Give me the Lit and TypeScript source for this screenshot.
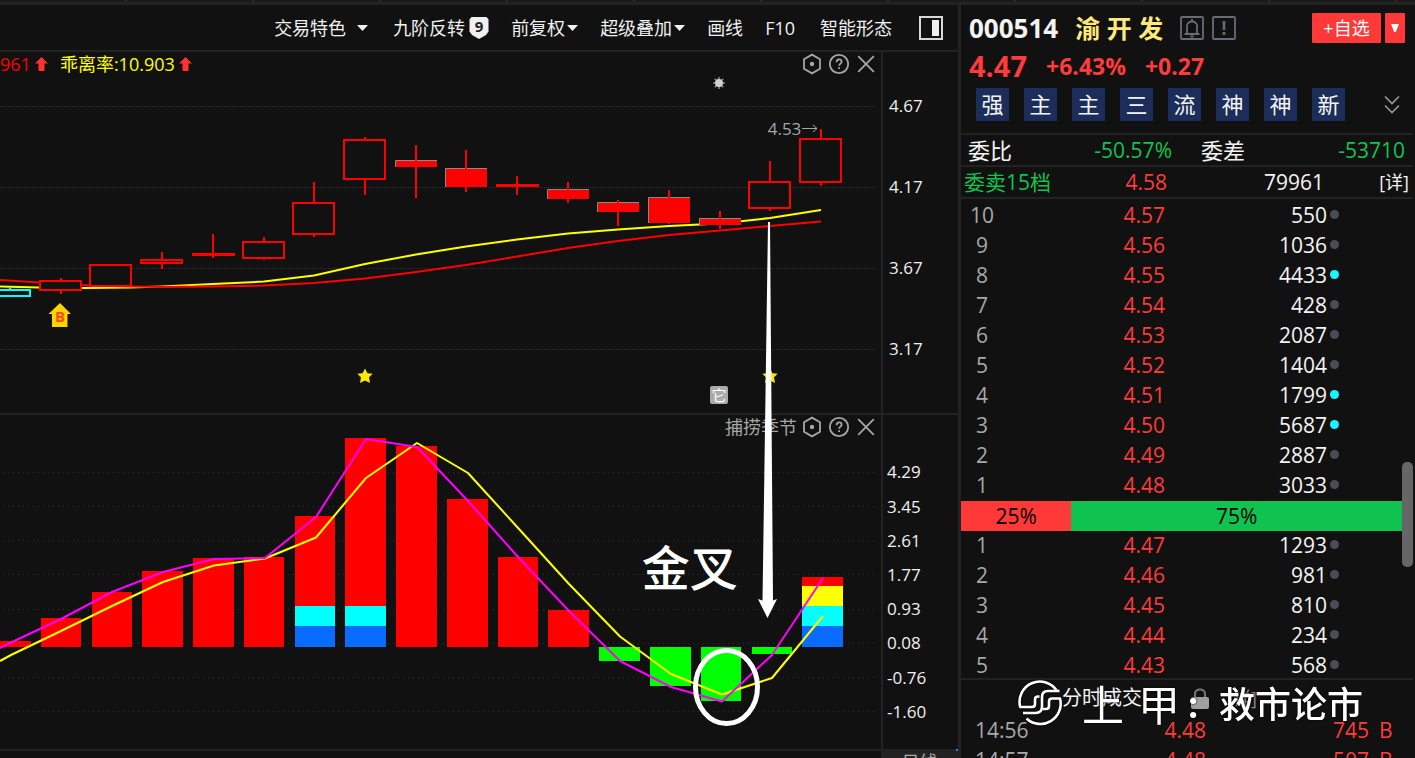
import { LitElement, html, css, svg } from "lit";
import { customElement } from "lit/decorators.js";

type Candle = { x: number; top: number; bottom: number; high: number; low: number; kind: "up" | "down" | "flat" | "cyan" };

const CANDLES: Candle[] = [
  { x: 10, top: 289, bottom: 296, high: 287, low: 297, kind: "cyan" },
  { x: 61, top: 280, bottom: 290, high: 278, low: 294, kind: "up" },
  { x: 111, top: 264, bottom: 286, high: 264, low: 286, kind: "up" },
  { x: 162, top: 259, bottom: 263, high: 252, low: 269, kind: "up" },
  { x: 213, top: 253, bottom: 256, high: 234, low: 258, kind: "flat" },
  { x: 264, top: 241, bottom: 258, high: 237, low: 260, kind: "up" },
  { x: 314, top: 202, bottom: 234, high: 182, low: 237, kind: "up" },
  { x: 365, top: 139, bottom: 179, high: 137, low: 195, kind: "up" },
  { x: 416, top: 160, bottom: 167, high: 145, low: 198, kind: "down" },
  { x: 466, top: 168, bottom: 187, high: 150, low: 192, kind: "down" },
  { x: 517, top: 184, bottom: 187, high: 176, low: 195, kind: "flat" },
  { x: 568, top: 189, bottom: 199, high: 182, low: 203, kind: "down" },
  { x: 618, top: 202, bottom: 212, high: 200, low: 226, kind: "down" },
  { x: 669, top: 197, bottom: 223, high: 190, low: 224, kind: "down" },
  { x: 720, top: 218, bottom: 225, high: 211, low: 229, kind: "down" },
  { x: 770, top: 181, bottom: 208, high: 161, low: 211, kind: "up" },
  { x: 821, top: 138, bottom: 182, high: 129, low: 186, kind: "up" },
];

const ZERO = 647;
const BARS: [number, number, number][] = [
  [-10, 31, 641], [41, 81, 618], [92, 132, 592], [142, 183, 571], [193, 234, 558], [244, 284, 557],
  [295, 335, 516], [345, 386, 438], [396, 437, 446], [447, 488, 499], [498, 538, 557], [548, 589, 610],
  [599, 640, 661], [650, 691, 686], [701, 741, 701], [752, 792, 654], [802, 843, 577],
];
const BANDS: [number, number, number, number, string][] = [
  [295, 335, 606, 626, "#00ffff"], [295, 335, 626, 647, "#0a6cff"],
  [345, 386, 606, 626, "#00ffff"], [345, 386, 626, 647, "#0a6cff"],
  [802, 843, 586, 606, "#ffff00"], [802, 843, 606, 626, "#00ffff"], [802, 843, 626, 647, "#0a6cff"],
];

const MA_FAST = "0,286.5 39,287.5 61,287.5 82,288 130,287.5 162,286.5 213,284 264,281.5 314,275.5 365,264 416,254.5 466,246.5 517,239.5 568,233.5 618,229.5 669,226 720,223.5 770,218 821,210";
const MA_SLOW = "0,280 39,282.5 61,284 91,285.5 132,286.5 162,287 213,286.5 264,285.5 314,283 365,278.5 416,272 466,265 517,256.5 568,248 618,241 669,235 720,230.5 770,226 821,221.5";
const OSC_FAST = "0,648 10,643 61,619 112,592 163,572 214,559 265,558 316,517 366,439 417,447 468,501 519,558 569,611 620,661 671,687 722,701.5 772,655 823,578";
const OSC_SLOW = "0,661 11,655 61,631 112,606 163,582 214,565.5 265,558.5 316,537.5 366,478 417,443 468,473 519,529 569,584 620,636.5 671,674 722,694.5 772,678 823,616";

const PRICE_TICKS = ["4.67", "4.17", "3.67", "3.17"];
const PRICE_GRID = [106.5, 187.5, 268.5, 349.5];
const OSC_TICKS = ["4.29", "3.45", "2.61", "1.77", "0.93", "0.08", "-0.76", "-1.60"];
const OSC_GRID = [472.5, 506.5, 540.5, 574.5, 609.5, 643.5, 677.5, 711.5];

type Quote = [string, string, string, boolean?];
const ASKS: Quote[] = [
  ["10", "4.57", "550"], ["9", "4.56", "1036"], ["8", "4.55", "4433", true], ["7", "4.54", "428"], ["6", "4.53", "2087"],
  ["5", "4.52", "1404"], ["4", "4.51", "1799", true], ["3", "4.50", "5687", true], ["2", "4.49", "2887"], ["1", "4.48", "3033"],
];
const BIDS: Quote[] = [
  ["1", "4.47", "1293"], ["2", "4.46", "981"], ["3", "4.45", "810"], ["4", "4.44", "234"], ["5", "4.43", "568"],
];
const TRADES = [["14:56", "4.48", "745", "B"], ["14:57", "4.48", "507", "B"]];
const TAGS = ["强", "主", "主", "三", "流", "神", "神", "新"];

const base = css`
  * { box-sizing: border-box; }
  button {
    font: inherit; color: inherit; background: none; border: 0; padding: 0; margin: 0; cursor: pointer;
    display: flex; align-items: center;
  }
  svg { display: block; flex: none; }
`;

@customElement("pane-tools")
class PaneTools extends LitElement {
  static styles = [base, css`
    :host { display: flex; gap: 5px; color: #a6a6a6; }
  `];
  render() {
    return html`
      <button aria-label="设置"><svg width="22" height="22" viewBox="0 0 22 22" fill="none" stroke="currentColor" stroke-width="1.8">
        <path d="M11 1.600 19 6.200v9.600l-8 4.600-8-4.600V6.200z"/><circle cx="11" cy="11" r="2.200" fill="currentColor" stroke="none"/></svg></button>
      <button aria-label="帮助"><svg width="22" height="22" viewBox="0 0 22 22" fill="none" stroke="currentColor" stroke-width="1.8">
        <circle cx="11" cy="11" r="9.2"/><path d="M8.600 9.200c0-3.800 5-3.400 5-.4 0 1.700-2.500 1.900-2.500 4"/><path d="M11.100 14.200v1.900"/></svg></button>
      <button aria-label="关闭"><svg width="22" height="22" viewBox="0 0 22 22" fill="none" stroke="currentColor" stroke-width="1.8">
        <path d="M3.200 3.200l15.600 15.600M18.800 3.200 3.200 18.800"/></svg></button>
    `;
  }
}

@customElement("chart-toolbar")
class ChartToolbar extends LitElement {
  static styles = [base, css`
    :host {
      display: flex; justify-content: flex-end; align-items: center; gap: 22px; height: 47px; padding: 0 15px 0 0;
      border-bottom: 2px solid #222; font-size: 18px; line-height: 24px; color: #f0f0f0; white-space: nowrap;
    }
    .item { gap: 2px; }
    .wide { gap: 11px; padding-right: 3px; }
    .badge { gap: 4px; }
    .code { padding-right: 3px; }
    .last { padding-right: 5px; }
  `];
  caret() {
    return svg`<svg width="11" height="6" viewBox="0 0 11 6"><path d="M0 0h11L5.5 6z" fill="currentColor"/></svg>`;
  }
  render() {
    return html`
      <button class="item wide">交易特色 ${this.caret()}</button>
      <button class="item badge">九阶反转
        <svg width="20" height="22" viewBox="0 0 20 22"><path d="M2.500 0h15l2 2.500v12l-2.500 3.500-7 4-7-4-2.500-3.500v-12z" fill="#f0f0f0"/>
          <text x="10" y="15" text-anchor="middle" font-family="Open Sans, sans-serif" font-size="15" font-weight="700" fill="#222">9</text></svg>
      </button>
      <button class="item">前复权${this.caret()}</button>
      <button class="item">超级叠加${this.caret()}</button>
      <button>画线</button>
      <button class="code">F10</button>
      <button class="last">智能形态</button>
      <button aria-label="侧栏"><svg width="24" height="24" viewBox="0 0 24 24"><rect x="1" y="1" width="22" height="22" fill="none" stroke="#d8d8d8" stroke-width="2"/><path d="M13 4h7v16h-7z" fill="#f0f0f0"/></svg></button>
    `;
  }
}

@customElement("stock-charts")
class StockCharts extends LitElement {
  static styles = [base, css`
    :host {
      position: relative; display: grid; grid-template-columns: minmax(0, 1fr) 75px;
      grid-template-rows: minmax(0, 361fr) minmax(0, 336fr); min-height: 0; font-size: 18px; line-height: 24px;
    }
    .pane { position: relative; min-height: 0; overflow: hidden; border-right: 2px solid #222; }
    .axis { display: grid; min-height: 0; color: #f0f0f0; font-size: 17px; align-items: center; padding-left: 6px; }
    .price-axis { grid-template-rows: 13fr repeat(4, 81fr) 24fr; }
    .osc-axis { grid-template-rows: 40fr repeat(8, 34fr) 20fr; padding-left: 4px; }
    .lower { border-top: 2px solid #222; }
    .plot { position: absolute; inset: 0; width: 100%; height: 100%; }
    .legend { position: absolute; left: 0; top: 0; display: flex; align-items: center; gap: 4px; }
    .fast { color: #ffff00; margin-left: 8px; }
    .slow { color: #ff0000; }
    .tools { position: absolute; right: 4px; top: 1px; display: flex; align-items: center; gap: 4px; color: #a6a6a6; }
    .lower .tools { top: 0; }
    .notes { position: absolute; inset: 0; width: 100%; height: 100%; pointer-events: none; }
    .peak { position: absolute; right: 7%; top: 18%; color: #a6a6a6; display: flex; align-items: center; font-size: 17px; }
    .event {
      position: absolute; left: 80.6%; top: 92.5%; width: 18px; height: 18px; border-radius: 2px;
      background: #aaa; color: #fff; font-size: 15px; line-height: 18px; text-align: center;
    }
    .cross { position: absolute; left: 67%; top: 70%; color: #fff; font-size: 48px; line-height: 56px; font-weight: 500; }
  `];

  candle(c: Candle) {
    const l = c.x - 21;
    const color = c.kind === "cyan" ? "#00ffff" : "#ff0000";
    const body =
      c.kind === "flat"
        ? svg`<rect x=${l} y=${c.top} width="43" height="3" fill="#f00"/>`
        : c.kind === "down"
          ? svg`<rect x=${l} y=${c.top} width="42" height=${c.bottom - c.top} fill="#f00"/>
                <path d="M${l + 0.5} ${c.bottom}V${c.top + 0.5}H${l + 42}" fill="none" stroke="#8a8a8a"/>`
          : svg`<rect x=${l} y=${c.top + 1} width="41" height=${c.bottom - c.top - 1} fill="#111" stroke=${color} stroke-width="2"/>`;
    return svg`<path d="M${c.x} ${c.high}V${c.low}" stroke=${color} stroke-width="2"/>${body}
      ${c.kind === "down" ? svg`<path d="M${c.x} ${c.high}V${c.low}" stroke="#f00" stroke-width="2"/>` : ""}`;
  }

  arrow() {
    return svg`<svg width="13" height="16" viewBox="0 0 13 16"><path d="M6.500 1 13 7.500H9.500V15h-6V7.500H0z" fill="#ff3232"/></svg>`;
  }

  star(x: number, y: number) {
    return svg`<path transform="translate(${x} ${y})" d="M0-7.500 2.400-2.700 7.700-2.300 4 1.200 5 7 0 4.600-5 7-4 1.200-7.700-2.300-2.400-2.700z" fill="#ffe800"/>`;
  }

  render() {
    return html`
      <section class="pane" aria-label="K线">
        <svg class="plot" viewBox="0 52 881 361" preserveAspectRatio="none">
          ${PRICE_GRID.map((y) => svg`<path d="M0 ${y}H875" stroke="#303030" stroke-dasharray="1 1"/>`)}
          <g fill="none" stroke-width="2" stroke-linejoin="round">
            <polyline points=${MA_FAST} stroke="#ff0"/>
            <polyline points=${MA_SLOW} stroke="#f00"/>
          </g>
          ${CANDLES.map((c) => this.candle(c))}
          ${this.star(365, 376)}${this.star(770, 376)}
          <path d="M60 303 71 314H67.500V327H52V314H48.500z" fill="#ffd500"/>
          <text x="60" y="322" text-anchor="middle" font-family="Open Sans, sans-serif" font-size="15" font-weight="700" fill="#ff4a22">B</text>
          <path d="M719 77v12M713 83h12M714.800 78.800l8.400 8.400M723.200 78.800l-8.400 8.400" stroke="#8c8c8c" stroke-width="1.500"/>
          <circle cx="719" cy="83" r="4" fill="#d0d0d0"/>
        </svg>
        <div class="legend">
          <span class="slow">961</span>${this.arrow()}
          <span class="fast">乖离率:10.903</span>${this.arrow()}
        </div>
        <div class="tools"><pane-tools></pane-tools></div>
        <div class="peak"><span>4.53</span><svg width="18" height="12" viewBox="0 0 18 12" fill="none" stroke="currentColor"><path d="M1 5.500h15M12 2l4 3.500L12 9"/></svg></div>
        <span class="event">它</span>
      </section>
      <div class="axis price-axis"><i></i>${PRICE_TICKS.map((t) => html`<span>${t}</span>`)}</div>

      <section class="pane lower" aria-label="捕捞季节">
        <svg class="plot" viewBox="0 415 881 334" preserveAspectRatio="none">
          ${OSC_GRID.map((y) => svg`<path d="M3 ${y}H875" stroke="#303030" stroke-dasharray="1 4"/>`)}
          ${BARS.map(([a, b, y]) => svg`<rect x=${a} y=${Math.min(y, ZERO)} width=${b - a} height=${Math.abs(y - ZERO)} fill=${y > ZERO ? "#0f0" : "#f00"}/>`)}
          ${BANDS.map(([a, b, t, e, f]) => svg`<rect x=${a} y=${t} width=${b - a} height=${e - t} fill=${f}/>`)}
          <g fill="none" stroke-width="2" stroke-linejoin="round">
            <polyline points=${OSC_SLOW} stroke="#ff0"/>
            <polyline points=${OSC_FAST} stroke="#f0f"/>
          </g>
        </svg>
        <div class="tools">捕捞季节<pane-tools></pane-tools></div>
      </section>
      <div class="axis osc-axis lower"><i></i>${OSC_TICKS.map((t) => html`<span>${t}</span>`)}</div>

      <svg class="notes" viewBox="0 52 958 697" preserveAspectRatio="none">
        <path d="M768 222h2L773 600.500l4-1.500-9.500 19-9.500-19 4.500 1.500z" fill="#fff"/>
        <ellipse cx="726.500" cy="687" rx="31" ry="36.500" fill="none" stroke="#fff" stroke-width="5"/>
      </svg>
      <span class="cross">金叉</span>
    `;
  }
}

@customElement("quote-panel")
class QuotePanel extends LitElement {
  static styles = [base, css`
    :host { position: relative; display: block; min-width: 0; overflow: hidden; font-size: 22px; line-height: 30px; color: #f4f4f4; white-space: nowrap; padding-right: 2px; }
    .n { font-size: 21px; }
    .red { color: #ff3b3b; }
    .green { color: #12c350; }
    .title { display: flex; align-items: center; height: 46px; padding: 0 8px; }
    .code { font-size: 26px; font-weight: 700; }
    .name { font-size: 25px; font-weight: 700; color: #ffe97a; margin: 0 17px 0 17px; }
    .mini { margin-right: 8px; }
    .add { margin-left: auto; width: 69px; height: 30px; justify-content: center; background: #ff3838; color: #fff; font-size: 18px; border-radius: 1px; }
    .more { width: 20px; height: 30px; margin-left: 4px; justify-content: center; background: #ff3838; border-radius: 1px; }
    .price { display: flex; align-items: center; gap: 19px; height: 30px; padding-left: 8px; font-weight: 700; font-size: 23px; }
    .last { font-size: 29px; }
    .tags { display: flex; align-items: center; gap: 15px; padding: 7px 13px 12px 15px; }
    .tag { width: 33px; height: 33px; padding-bottom: 2px; justify-content: center; background: #1c2d5a; }
    .expand { margin-left: auto; }
    .row { display: grid; align-items: center; border-top: 2px solid #222; height: 32px; }
    .right { text-align: right; }
    .pair { display: flex; justify-content: space-between; }
    .ratio { grid-template-columns: 204px 1fr; column-gap: 29px; padding: 0 8px 0 7px; }
    .total { grid-template-columns: 203px 157px 1fr; padding: 0 4px 0 3px; }
    .detail { font-size: 18px; color: #f4f4f4; text-decoration: none; }
    .book { position: relative; border-top: 2px solid #222; padding: 2px 11px 0 0; }
    table { width: 100%; border-collapse: collapse; table-layout: fixed; font-size: 21px; }
    td { padding: 0; height: 30px; line-height: 28px; vertical-align: top; }
    .c1 { width: 42px; text-align: center; color: #a8a8a8; }
    .c2 { width: 162px; text-align: right; }
    .c3 { width: 162px; text-align: right; }
    .dot { display: block; width: 9px; height: 9px; border-radius: 50%; background: #4a4c56; margin: 9px 0 0 3px; }
    .big { background: #19f5ff; }
    .split { display: flex; color: #000; font-size: 21px; }
    .buy { width: 25%; background: #ff3838; text-align: center; }
    .sell { flex: 1; background: #10c350; text-align: center; }
    .bids { margin-bottom: -3px; }
    .thumb { position: absolute; right: 0; top: 263px; width: 11px; height: 105px; border-radius: 5px; background: #666; }
    .tape { border-top: 2px solid #222; }
    .tape-head { display: flex; align-items: center; height: 36px; padding-left: 101px; font-size: 20px; }
    .lock { margin: 0 18px 0 49px; }
    .dim { color: #8b8b8b; font-size: 18px; text-decoration: none; }
    .t1 { width: 81px; padding-left: 14px; color: #a8a8a8; }
    .t2 { width: 164px; text-align: right; }
    .t3 { width: 163px; text-align: right; }
    .t4 { padding-left: 10px; }
    .mark {
      position: absolute; left: 57px; bottom: 29px; display: flex; align-items: flex-start; color: #fff;
      font-size: 36px; line-height: 48px; font-weight: 500; filter: drop-shadow(0 0 1px #000);
    }
    .logo { overflow: visible; }
    .brand { font-size: 42px; font-weight: 400; display: flex; gap: 14px; margin-left: 20px; }
    .colon { width: 39px; padding-left: 8px; font-weight: 700; }
  `];

  book(rows: Quote[], cls: string) {
    return html`<table class=${cls}><tbody>${rows.map(
      ([level, price, vol, hot]) => html`<tr><td class="c1">${level}</td><td class="c2 red">${price}</td><td class="c3">${vol}</td>
        <td><span class="dot ${hot ? "big" : ""}"></span></td></tr>`
    )}</tbody></table>`;
  }

  render() {
    return html`
      <div class="title">
        <span class="code">000514</span><span class="name">渝 开 发</span>
        <button class="mini" aria-label="预警"><svg width="24" height="24" viewBox="0 0 24 24" fill="none" stroke="#686b73" stroke-width="1.800">
          <rect x="1" y="1" width="22" height="22" rx="1"/><path d="M4.500 18h15M7 18v-8c0-6 10-6 10 0v8M12 3v2M10.500 20.500h3"/></svg></button>
        <button class="mini" aria-label="提示"><svg width="24" height="24" viewBox="0 0 24 24" fill="none" stroke="#686b73" stroke-width="1.800">
          <rect x="1" y="1" width="22" height="22" rx="1"/><path d="M12 5v9M12 16v3" stroke-width="2.600"/></svg></button>
        <button class="add">+自选</button>
        <button class="more" aria-label="更多"><svg width="8" height="8" viewBox="0 0 8 8"><path d="M0 0h8L4.800 8H3.200z" fill="#fff"/></svg></button>
      </div>
      <div class="price red"><span class="last">4.47</span><span>+6.43%</span><span>+0.27</span></div>
      <div class="tags">
        ${TAGS.map((t) => html`<button class="tag">${t}</button>`)}
        <button class="expand" aria-label="展开"><svg width="16" height="20" viewBox="0 0 16 20" fill="none" stroke="#9a9a9a" stroke-width="1.600"><path d="M1 1.500l7 7 7-7M1 10.500l7 7 7-7"/></svg></button>
      </div>
      <div class="row ratio">
        <div class="pair"><span>委比</span><span class="n green">-50.57%</span></div>
        <div class="pair"><span>委差</span><span class="n green">-53710</span></div>
      </div>
      <div class="row total">
        <div class="pair"><span class="n green">委卖15档</span><span class="n red">4.58</span></div>
        <span class="n right">79961</span>
        <a class="detail right" href="#">[详]</a>
      </div>
      <div class="book">
        ${this.book(ASKS, "asks")}
        <div class="split"><span class="buy">25%</span><span class="sell">75%</span></div>
        ${this.book(BIDS, "bids")}
        <div class="thumb"></div>
      </div>
      <div class="tape">
        <div class="tape-head"><span>分时成交</span>
          <svg class="lock" width="18" height="21" viewBox="0 0 18 21"><path d="M4 9V6c0-6 10-6 10 0v3" fill="none" stroke="#777" stroke-width="2"/><rect x="0" y="9" width="18" height="12" rx="2" fill="#a0a0a0"/></svg>
          <a class="dim" href="#">[详]</a></div>
        <table><tbody>${TRADES.map(([t, p, v, s]) => html`<tr><td class="t1">${t}</td><td class="t2 red">${p}</td><td class="t3 red">${v}</td><td class="t4 red">${s}</td></tr>`)}</tbody></table>
      </div>
      <div class="mark">
        <svg class="logo" width="44" height="44" viewBox="0 0 44 44" fill="none" stroke="#fff" stroke-width="2.600" stroke-linejoin="round">
          <path d="M39 10A20.300 20.300 0 0 0 2.200 26H14q3 0 3-3v-4.500q0-3 3-3h1.500"/>
          <path d="M41.500 10H30q-6 0-6 6v9.500q0 6.500-6.500 6.500H5"/>
          <path d="M8.500 37.500A20.300 20.300 0 0 0 42 17.500H34q-3 0-3 3V25q0 3-3 3h-3"/>
        </svg>
        <span class="brand"><span>上</span><span>甲</span></span><span class="colon">:</span><span>救市论市</span>
      </div>
    `;
  }
}

@customElement("app-root")
class AppRoot extends LitElement {
  static styles = [base, css`
    :host {
      display: grid; grid-template-columns: minmax(0, 958fr) minmax(0, 457fr); grid-template-rows: 5px minmax(0, 1fr);
      height: 100vh; overflow: hidden; background: #111; color: #f0f0f0;
      font-family: "Open Sans", "Noto Sans CJK SC", sans-serif; font-weight: 400;
    }
    .strip {
      grid-column: 1 / -1; border-bottom: 3px solid #222;
      background: repeating-linear-gradient(90deg, #1a1a1a 0 125px, #2a2a2a 125px 127px);
    }
    .left { display: grid; grid-template-rows: auto minmax(0, 1fr) 9px; min-width: 0; }
    .side { border-left: 3px solid #222; min-width: 0; display: grid; }
    .foot { display: grid; grid-template-columns: 1fr 77px; overflow: hidden; }
    .rest { border-top: 2px solid #222; }
    .period {
      background: linear-gradient(#1c8cff, #1c8cff) top right / 2px 2px no-repeat #222;
      color: #aaa; font-size: 18px; line-height: 26px; text-align: center;
    }
  `];
  render() {
    return html`
      <div class="strip"></div>
      <main class="left">
        <chart-toolbar></chart-toolbar>
        <stock-charts></stock-charts>
        <div class="foot"><div class="rest"></div><div class="period">日线</div></div>
      </main>
      <aside class="side"><quote-panel></quote-panel></aside>
    `;
  }
}
